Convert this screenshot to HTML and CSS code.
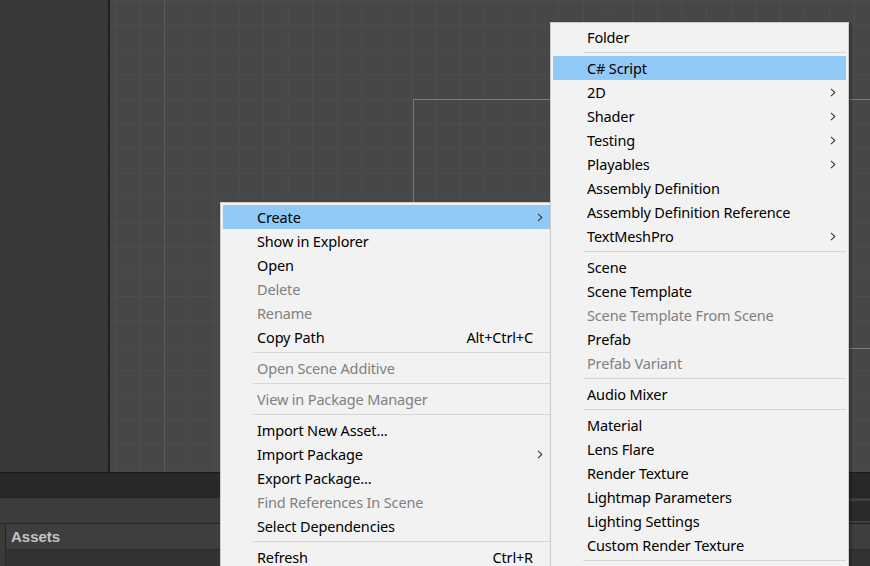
FILE: index.html
```html
<!DOCTYPE html>
<html>
<head>
<meta charset="utf-8">
<link rel="stylesheet" href="styles.css">
</head>
<body>
<div class="editor">
  <div class="top">
    <div class="hierarchy"></div>
    <div class="divider"></div>
    <div class="scene">
      <div class="gizmo"></div>
    </div>
  </div>
  <div class="bar-dark"></div>
  <div class="bar-tool"><div class="search"></div></div>
  <div class="project">
    <div class="project-left"></div>
    <div class="project-main">
      <div class="assets-head">Assets</div>
      <div class="assets-body"></div>
    </div>
  </div>

  <div class="menu menu-main">
    <div class="item hl"><span class="label">Create</span><svg class="arrow" width="6" height="9" viewBox="0 0 6 9"><polyline points="1,0.8 4.8,4.5 1,8.2" fill="none" stroke="#3c3c3c" stroke-width="1.1"/></svg></div>
    <div class="item"><span class="label">Show in Explorer</span></div>
    <div class="item"><span class="label">Open</span></div>
    <div class="item dis"><span class="label">Delete</span></div>
    <div class="item dis"><span class="label">Rename</span></div>
    <div class="item"><span class="label">Copy Path</span><span class="key">Alt+Ctrl+C</span></div>
    <div class="sep"></div>
    <div class="item dis"><span class="label">Open Scene Additive</span></div>
    <div class="sep"></div>
    <div class="item dis"><span class="label">View in Package Manager</span></div>
    <div class="sep"></div>
    <div class="item"><span class="label">Import New Asset...</span></div>
    <div class="item"><span class="label">Import Package</span><svg class="arrow" width="6" height="9" viewBox="0 0 6 9"><polyline points="1,0.8 4.8,4.5 1,8.2" fill="none" stroke="#3c3c3c" stroke-width="1.1"/></svg></div>
    <div class="item"><span class="label">Export Package...</span></div>
    <div class="item dis"><span class="label">Find References In Scene</span></div>
    <div class="item"><span class="label">Select Dependencies</span></div>
    <div class="sep"></div>
    <div class="item"><span class="label">Refresh</span><span class="key">Ctrl+R</span></div>
  </div>

  <div class="menu menu-sub">
    <div class="item"><span class="label">Folder</span></div>
    <div class="sep"></div>
    <div class="item hl"><span class="label">C# Script</span></div>
    <div class="item"><span class="label">2D</span><svg class="arrow" width="6" height="9" viewBox="0 0 6 9"><polyline points="1,0.8 4.8,4.5 1,8.2" fill="none" stroke="#3c3c3c" stroke-width="1.1"/></svg></div>
    <div class="item"><span class="label">Shader</span><svg class="arrow" width="6" height="9" viewBox="0 0 6 9"><polyline points="1,0.8 4.8,4.5 1,8.2" fill="none" stroke="#3c3c3c" stroke-width="1.1"/></svg></div>
    <div class="item"><span class="label">Testing</span><svg class="arrow" width="6" height="9" viewBox="0 0 6 9"><polyline points="1,0.8 4.8,4.5 1,8.2" fill="none" stroke="#3c3c3c" stroke-width="1.1"/></svg></div>
    <div class="item"><span class="label">Playables</span><svg class="arrow" width="6" height="9" viewBox="0 0 6 9"><polyline points="1,0.8 4.8,4.5 1,8.2" fill="none" stroke="#3c3c3c" stroke-width="1.1"/></svg></div>
    <div class="item"><span class="label">Assembly Definition</span></div>
    <div class="item"><span class="label">Assembly Definition Reference</span></div>
    <div class="item"><span class="label">TextMeshPro</span><svg class="arrow" width="6" height="9" viewBox="0 0 6 9"><polyline points="1,0.8 4.8,4.5 1,8.2" fill="none" stroke="#3c3c3c" stroke-width="1.1"/></svg></div>
    <div class="sep"></div>
    <div class="item"><span class="label">Scene</span></div>
    <div class="item"><span class="label">Scene Template</span></div>
    <div class="item dis"><span class="label">Scene Template From Scene</span></div>
    <div class="item"><span class="label">Prefab</span></div>
    <div class="item dis"><span class="label">Prefab Variant</span></div>
    <div class="sep"></div>
    <div class="item"><span class="label">Audio Mixer</span></div>
    <div class="sep"></div>
    <div class="item"><span class="label">Material</span></div>
    <div class="item"><span class="label">Lens Flare</span></div>
    <div class="item"><span class="label">Render Texture</span></div>
    <div class="item"><span class="label">Lightmap Parameters</span></div>
    <div class="item"><span class="label">Lighting Settings</span></div>
    <div class="item"><span class="label">Custom Render Texture</span></div>
    <div class="sep"></div>
  </div>
</div>
</body>
</html>
```

FILE: styles.css
```css
html, body {
  margin: 0;
  padding: 0;
  background: #333333;
}

.editor {
  position: relative;
  width: 870px;
  height: 566px;
  overflow: hidden;
  display: flex;
  flex-direction: column;
  font-family: "Noto Sans", "Open Sans", sans-serif;
}

.top {
  display: flex;
  height: 472px;
  flex: none;
}

.hierarchy {
  width: 108px;
  background: #383838;
}

.divider {
  width: 2px;
  background: #1f1f1f;
}

.scene {
  position: relative;
  flex: 1;
  background-color: #474747;
  background-image:
    linear-gradient(to right, transparent 54px, #595959 54px, #595959 55px, transparent 55px),
    linear-gradient(to right, #4d4d4d 1px, transparent 1px),
    linear-gradient(to bottom, #4d4d4d 1px, transparent 1px);
  background-size: 100% 100%, 24.62px 100%, 100% 24.65px;
  background-position: 0 0, 5.4px 0, 0 0.3px;
}

.gizmo {
  position: absolute;
  left: 303px;
  top: 99px;
  width: 700px;
  height: 248px;
  border: 1px solid #7b7b7b;
  border-right: none;
}

.bar-dark {
  flex: none;
  background: #282828;
  border-top: 1px solid #1b1b1b;
  border-bottom: 1px solid #222222;
  box-sizing: border-box;
  height: 26px;
}

.bar-tool {
  height: 25px;
  flex: none;
  background: #3c3c3c;
  display: flex;
  align-items: center;
  justify-content: flex-end;
}

.search {
  width: 290px;
  height: 20px;
  margin-right: -4px;
  background: #2b2b2b;
  border-top: 2px solid #3f3f3f;
  border-bottom: 2px solid #3f3f3f;
}

.project {
  flex: 1;
  display: flex;
  border-top: 1px solid #242424;
}

.project-left {
  width: 5px;
  background: #3a3a3a;
  border-right: 1px solid #262626;
}

.project-main {
  flex: 1;
  display: flex;
  flex-direction: column;
}

.assets-head {
  height: 25px;
  background: #3e3e3e;
  border-bottom: 1px solid #2a2a2a;
  color: #c4c4c4;
  font-family: "Liberation Sans", Arial, sans-serif;
  font-weight: bold;
  font-size: 15px;
  line-height: 26px;
  padding-left: 5px;
}

.assets-body {
  flex: 1;
  background: #333333;
}

/* Context menus */
.menu {
  position: absolute;
  box-sizing: border-box;
  background: #f2f2f2;
  border: 1px solid #cccccc;
  padding: 2px;
  box-shadow: 2px 2px 3px rgba(0, 0, 0, 0.35);
  color: #000000;
  font-size: 14.5px;
  letter-spacing: -0.15px;
}

.menu-main {
  left: 220px;
  top: 202px;
  width: 336px;
  z-index: 1;
}

.menu-sub {
  left: 550px;
  top: 22px;
  width: 299px;
  z-index: 2;
}

.item {
  display: flex;
  align-items: center;
  height: 24px;
  padding-left: 34px;
  padding-right: 20px;
  white-space: nowrap;
}

.item .label {
  flex: 1;
  line-height: 24px;
}

.item .key {
  line-height: 24px;
}

.item .arrow {
  margin-right: -10px;
  display: block;
}

.item.hl {
  background: #91c9f7;
}

.item.dis {
  color: #808080;
}

.sep {
  height: 7px;
  position: relative;
}

.sep::before {
  content: "";
  position: absolute;
  left: 30px;
  right: 0;
  top: 3px;
  height: 1px;
  background: #d7d7d7;
}
```
